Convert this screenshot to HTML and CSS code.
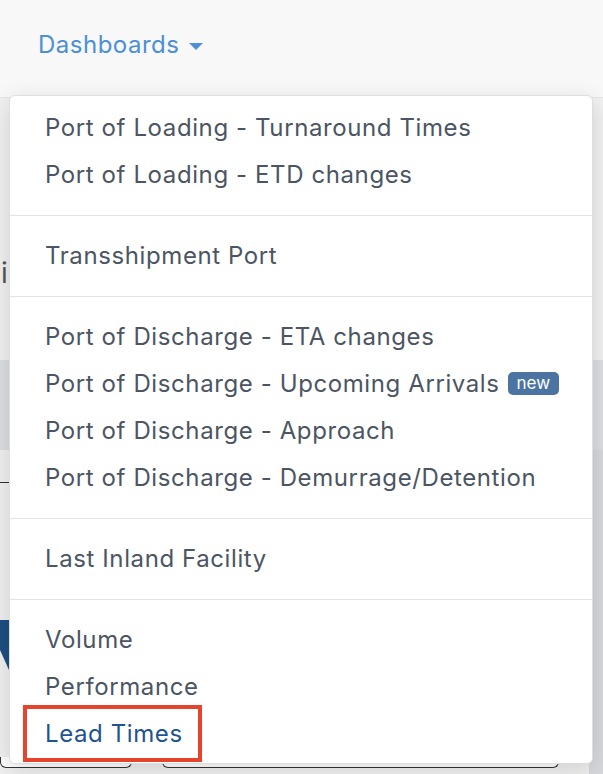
FILE: index.html
```html
<!DOCTYPE html>
<html lang="en">
<head>
  <meta charset="UTF-8" />
  <meta name="viewport" content="width=device-width, initial-scale=1.0"/>
  <title>Dashboards</title>
  <link rel="stylesheet" href="styles.css">
</head>
<body>
  <header class="topbar">
    <div class="nav-item">
      <a class="nav-link" href="#">Dashboards <span class="caret"></span></a>

      <div class="dropdown">
        <div class="group">
          <a class="item" href="#">Port of Loading - Turnaround Times</a>
          <a class="item" href="#">Port of Loading - ETD changes</a>
        </div>
        <div class="group">
          <a class="item" href="#">Transshipment Port</a>
        </div>
        <div class="group">
          <a class="item" href="#">Port of Discharge - ETA changes</a>
          <a class="item" href="#">Port of Discharge - Upcoming Arrivals <span class="badge">new</span></a>
          <a class="item" href="#">Port of Discharge - Approach</a>
          <a class="item" href="#">Port of Discharge - Demurrage/Detention</a>
        </div>
        <div class="group">
          <a class="item" href="#">Last Inland Facility</a>
        </div>
        <div class="group">
          <a class="item" href="#">Volume</a>
          <a class="item" href="#">Performance</a>
          <a class="item active" href="#">Lead Times</a>
        </div>
      </div>
    </div>
  </header>

  <main class="page">
    <div class="page-head">
      <h1 class="page-title">i</h1>
    </div>
    <div class="filter-band"></div>
    <div class="content">
      <div class="left-col">
        <div class="tabs"></div>
        <div class="chart">
          <div class="chart-shape"></div>
        </div>
        <div class="inputs">
          <div class="input small"></div>
          <div class="input wide"></div>
        </div>
      </div>
      <div class="right-col"></div>
    </div>
  </main>
</body>
</html>
```

FILE: styles.css
```css
body {
  margin: 0;
  height: 774px;
  background: #f1f1f1;
  font-family: Inter, "Noto Sans", sans-serif;
  overflow: hidden;
}
a {
  text-decoration: none;
}

/* top bar */
.topbar {
  height: 97px;
  background: #f8f8f8;
  border-bottom: 1px solid #e6e6e6;
  position: relative;
  z-index: 2;
}
.nav-item {
  padding: 27px 0 0 38px;
}
.nav-link {
  color: #4a8fd7;
  font-size: 24px;
  letter-spacing: 0.5px;
  line-height: 36px;
  display: inline-flex;
  align-items: center;
  gap: 10px;
}
.caret {
  width: 0;
  height: 0;
  border-left: 7px solid transparent;
  border-right: 7px solid transparent;
  border-top: 7px solid #4a8fd7;
  margin-top: 2px;
}

/* dropdown menu */
.dropdown {
  position: absolute;
  top: 95px;
  left: 9px;
  width: 582px;
  background: #fff;
  border: 1px solid #dedede;
  border-radius: 6px;
  box-shadow: 0 6px 24px rgba(0,0,0,0.14);
  padding: 8px 0 6px;
}
.group {
  padding: 16px 0 17px;
  border-bottom: 1px solid #e4e4e4;
}
.group:first-child {
  padding-top: 0;
}
.group:last-child {
  border-bottom: none;
  padding-bottom: 0;
}
.item {
  display: flex;
  align-items: center;
  gap: 8px;
  height: 47px;
  padding: 0 16px 0 35px;
  color: #4b5563;
  font-size: 24px;
  letter-spacing: 0.6px;
  white-space: nowrap;
  position: relative;
}
.item.active {
  color: #215391;
}
.item.active::after {
  content: "";
  position: absolute;
  left: 13px;
  top: -5px;
  width: 171px;
  height: 49px;
  border: 4px solid #e5432b;
}
.badge {
  background: #4b74a2;
  color: #fff;
  font-size: 17px;
  letter-spacing: 0;
  line-height: 23px;
  padding: 0 9px;
  border-radius: 5px;
}

/* page behind the menu */
.page-head {
  height: 262px;
  padding-left: 1px;
  box-sizing: border-box;
  padding-top: 158px;
}
.page-title {
  margin: 0;
  font-size: 28px;
  font-weight: 400;
  line-height: 34px;
  color: #555;
}
.filter-band {
  height: 90px;
  background: #dcdee2;
}
.content {
  display: grid;
  grid-template-columns: 1fr 14px;
  height: 324px;
}
.left-col {
  background: #f0f0f0;
}
.tabs {
  height: 32px;
  border-bottom: 1px solid #333;
}
.chart {
  height: 137px;
  padding-top: 137px;
}
.chart-shape {
  width: 9px;
  height: 50px;
  background: #1e4f80;
  clip-path: polygon(0 0, 100% 0, 100% 100%, 0 60%);
}
.inputs {
  display: flex;
  gap: 30px;
}
.input {
  height: 10px;
  border: 1px solid #333;
  border-top: none;
  border-radius: 0 0 6px 6px;
  background: #fff;
}
.input.small {
  width: 130px;
}
.input.wide {
  width: 395px;
}
.right-col {
  background: #d6d8dc;
}
```
